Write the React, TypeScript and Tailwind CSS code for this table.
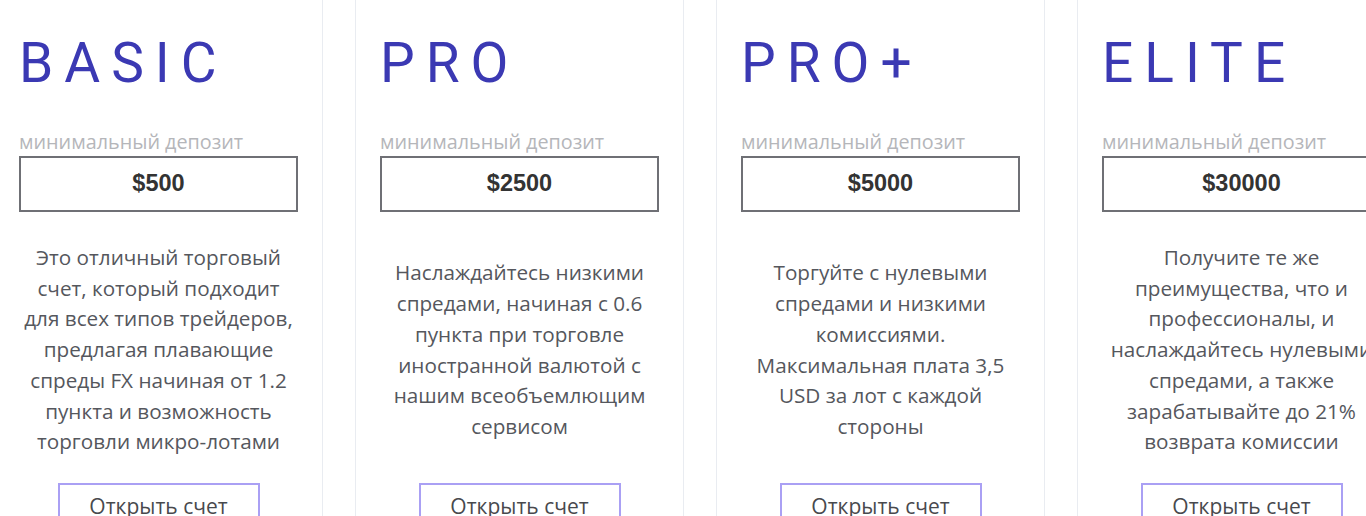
const plans = [
  {
    name: 'BASIC',
    deposit: '$500',
    text: 'Это отличный торговый счет, который подходит для всех типов трейдеров, предлагая плавающие спреды FX начиная от 1.2 пункта и возможность торговли микро-лотами',
  },
  {
    name: 'PRO',
    deposit: '$2500',
    text: 'Наслаждайтесь низкими спредами, начиная с 0.6 пункта при торговле иностранной валютой с нашим всеобъемлющим сервисом',
  },
  {
    name: 'PRO+',
    deposit: '$5000',
    text: 'Торгуйте с нулевыми спредами и низкими комиссиями. Максимальная плата 3,5 USD за лот с каждой стороны',
  },
  {
    name: 'ELITE',
    deposit: '$30000',
    text: 'Получите те же преимущества, что и профессионалы, и наслаждайтесь нулевыми спредами, а также зарабатывайте до 21% возврата комиссии',
  },
]

function PlanCard({ name, deposit, text }: { name: string; deposit: string; text: string }) {
  return (
    <div className="w-[329px] shrink-0 border-x border-[#e9ecf1] bg-white px-6">
      <h2 className="pt-[36px] font-['Roboto',sans-serif] text-[55px] leading-[55px] font-normal tracking-[0.2em] text-[#3b39b3]">
        {name}
      </h2>

      {/* депозит */}
      <div className="mt-[41px] mb-1 font-['Open_Sans',Arial,sans-serif] text-[19.8px] leading-[20px] whitespace-nowrap text-[#b5b6ba]">
        минимальный депозит
      </div>
      <div className="flex h-[56px] items-center justify-center border-2 border-[#6f7075] font-['Liberation_Sans',Arial,sans-serif] text-[23.5px] font-bold text-[#333]">
        {deposit}
      </div>

      <div className="mt-[30px] flex h-[215px] items-center justify-center">
        <p className="text-center font-['Open_Sans',sans-serif] text-[20.7px] leading-[30.7px] text-[#55575d]">
          {text}
        </p>
      </div>

      <div className="mx-auto mt-[26px] flex h-[48px] w-[202px] items-center justify-center border-2 border-[#aaa0f4] font-['Open_Sans',sans-serif] text-[21px] text-[#48494d]">
        Открыть счет
      </div>
    </div>
  )
}

export default function App() {
  return (
    <div className="h-[516px] w-[1366px] overflow-hidden bg-white">
      <div className="ml-[-6px] flex gap-8">
        {plans.map((p) => (
          <PlanCard key={p.name} {...p} />
        ))}
      </div>
    </div>
  )
}
